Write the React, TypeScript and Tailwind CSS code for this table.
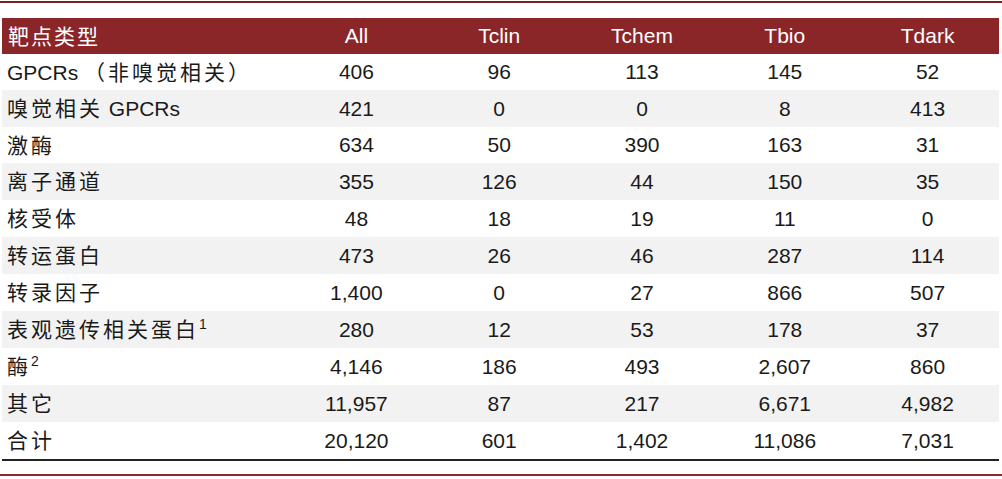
import React from "react";

const cjk = "font-['Noto_Sans_CJK_SC',sans-serif] tracking-[3px]";

interface Row {
  label: React.ReactNode;
  values: string[];
  h: string;
}

const rows: Row[] = [
  {
    label: (
      <>
        GPCRs <span className={cjk}>（非嗅觉相关）</span>
      </>
    ),
    values: ["406", "96", "113", "145", "52"],
    h: "h-[36px]",
  },
  {
    label: (
      <>
        <span className={cjk}>嗅觉相关</span> GPCRs
      </>
    ),
    values: ["421", "0", "0", "8", "413"],
    h: "h-[37px]",
  },
  { label: <span className={cjk}>激酶</span>, values: ["634", "50", "390", "163", "31"], h: "h-[36px]" },
  { label: <span className={cjk}>离子通道</span>, values: ["355", "126", "44", "150", "35"], h: "h-[37px]" },
  { label: <span className={cjk}>核受体</span>, values: ["48", "18", "19", "11", "0"], h: "h-[37px]" },
  { label: <span className={cjk}>转运蛋白</span>, values: ["473", "26", "46", "287", "114"], h: "h-[37px]" },
  { label: <span className={cjk}>转录因子</span>, values: ["1,400", "0", "27", "866", "507"], h: "h-[37px]" },
  {
    label: (
      <>
        <span className={cjk}>表观遗传相关蛋白</span>
        <sup className="text-[14px] -top-[8px]">1</sup>
      </>
    ),
    values: ["280", "12", "53", "178", "37"],
    h: "h-[37px]",
  },
  {
    label: (
      <>
        <span className={cjk}>酶</span>
        <sup className="text-[14px] -top-[8px]">2</sup>
      </>
    ),
    values: ["4,146", "186", "493", "2,607", "860"],
    h: "h-[37px]",
  },
  { label: <span className={cjk}>其它</span>, values: ["11,957", "87", "217", "6,671", "4,982"], h: "h-[37px]" },
  { label: <span className={cjk}>合计</span>, values: ["20,120", "601", "1,402", "11,086", "7,031"], h: "h-[37px]" },
];

const headers = ["All", "Tclin", "Tchem", "Tbio", "Tdark"];

export default function App() {
  return (
    <div className="w-[1002px] h-[479px] bg-white overflow-hidden font-['Liberation_Sans',Arial,sans-serif] text-[21px] text-[#1a1a1a]">
      <div className="mt-[1px] h-[2px] bg-[#7d1f22]" />
      <div className="mt-[15px] ml-[2px] mr-[3px]">
        {/* header */}
        <div className="grid grid-cols-[283px_repeat(5,1fr)] h-[36px] bg-[#8b2628] text-white items-center">
          <div className="pl-[6px] font-['Noto_Sans_CJK_SC',sans-serif] tracking-[2px]">靶点类型</div>
          {headers.map((h) => (
            <div key={h} className="text-center">
              {h}
            </div>
          ))}
        </div>
        {/* body */}
        {rows.map((r, i) => (
          <div
            key={i}
            className={`grid grid-cols-[283px_repeat(5,1fr)] ${r.h} items-center ${
              i % 2 === 1 ? "bg-[#f2f2f2]" : "bg-white"
            }`}
          >
            <div className="pl-[5px] whitespace-nowrap">{r.label}</div>
            {r.values.map((v, j) => (
              <div key={j} className="text-center">
                {v}
              </div>
            ))}
          </div>
        ))}
        <div className="h-[2px] bg-[#222]" />
      </div>
      <div className="mt-[13px] h-[2px] bg-[#8b2a2c]" />
    </div>
  );
}
